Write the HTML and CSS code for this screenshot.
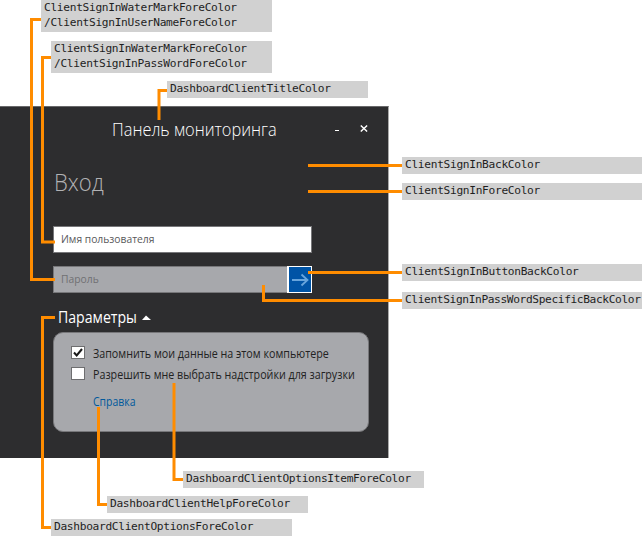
FILE: index.html
```html
<!DOCTYPE html>
<html lang="ru">
<head>
<meta charset="utf-8">
<title>Панель мониторинга</title>
<link rel="stylesheet" href="styles.css">
</head>
<body>
<main class="diagram">
  <section class="window">
    <header class="titlebar">
      <h1 class="title"><span>Панель мониторинга</span></h1>
      <span class="minimize"></span>
      <svg class="close" width="8" height="7" viewBox="0 0 8 7"><path d="M.8.5 7.2 6.5M7.2.5.8 6.5"/></svg>
    </header>
    <h2 class="heading"><span>Вход</span></h2>
    <div class="field user"><span class="user-text">Имя пользователя</span></div>
    <div class="field password">
      <span class="pass-text">Пароль</span>
      <div class="submit"><svg width="22" height="24" viewBox="0 0 22 24"><path d="M3 13H18.500M12.500 7.500 18.500 13 12.500 18.500"/></svg></div>
    </div>
    <div class="options-toggle"><span>Параметры</span><svg width="10" height="5" viewBox="0 0 10 5"><path d="M0 5 4 0.500 9 5z"/></svg></div>
    <div class="options">
      <div class="option"><span class="box"><svg width="12" height="11" viewBox="0 0 12 11"><path d="M2 5.500 4.700 8.500 10 2"/></svg></span><span class="remember">Запомнить мои данные на этом компьютере</span></div>
      <div class="option"><span class="box"></span><span class="addins">Разрешить мне выбрать надстройки для загрузки</span></div>
      <a class="help">Справка</a>
    </div>
  </section>

  <svg class="leaders" width="642" height="536" viewBox="0 0 642 536">
    <path d="M41 19.500H31.500V279.500H55"/>
    <path d="M52 57.500H42.500V242H55"/>
    <path d="M168 90.500H159V120"/>
    <path d="M308 165.500H402M308 191.500H402M308 272.500H402"/>
    <path d="M263.500 285V300.500H402"/>
    <path d="M55 317.500H42.500V527.500H52"/>
    <path d="M98.500 407V504.500H108"/>
    <path d="M174 383V479.500H184"/>
  </svg>

  <div class="label double l-user">ClientSignInWaterMarkForeColor<br>/ClientSignInUserNameForeColor</div>
  <div class="label double l-pass">ClientSignInWaterMarkForeColor<br>/ClientSignInPassWordForeColor</div>
  <div class="label l-title">DashboardClientTitleColor</div>
  <div class="label l-back">ClientSignInBackColor</div>
  <div class="label l-fore">ClientSignInForeColor</div>
  <div class="label l-button">ClientSignInButtonBackColor</div>
  <div class="label l-specific">ClientSignInPassWordSpecificBackColor</div>
  <div class="label l-item">DashboardClientOptionsItemForeColor</div>
  <div class="label l-help">DashboardClientHelpForeColor</div>
  <div class="label l-options">DashboardClientOptionsForeColor</div>
</main>
</body>
</html>
```
FILE: styles.css
```css
* { box-sizing: border-box; }
body { margin: 0; background: #fff; }
.diagram {
  position: relative;
  width: 642px;
  height: 536px;
  padding-top: 106px;
  overflow: hidden;
  font-family: "Open Sans", "Noto Sans", sans-serif;
}
.window {
  width: 389px;
  height: 352px;
  padding: 0 20px 0 53px;
  background: #2d2d2f;
  border-top: 1px solid #68686a;
  border-right: 1px solid #aaa;
}
.window span { transform-origin: left center; }
.titlebar { display: flex; height: 44px; align-items: center; color: #fff; }
.title {
  width: 225px;
  margin: 0 0 0 59px;
  font-size: 17.5px;
  line-height: 24px;
  font-weight: 300;
  white-space: nowrap;
}
.title span { display: block; width: max-content; transform: scaleX(.937); }
.minimize { width: 4px; height: 1px; margin: 3px 0 0 1px; background: #fff; }
.close { margin: -2px 0 0 21px; fill: none; stroke: #fff; stroke-width: 1.5; }
.heading {
  height: 76px;
  margin: 0;
  padding: 15px 0 0 1px;
  color: #b2b2b4;
  font-size: 24px;
  line-height: 32px;
  font-weight: 300;
}
.heading span { display: inline-block; transform: scaleX(.92); }
.field {
  display: flex;
  width: 259px;
  height: 27px;
  align-items: center;
  justify-content: space-between;
  padding-left: 7px;
  border: 1px solid #77777a;
  font-size: 11px;
}
.user { margin-top: -1px; background: #fff; color: #58585a; }
.password { margin-top: 13px; background: #a7a8ac; color: #707073; }
.user-text, .pass-text { margin-top: -2px; transform: scaleX(.937); }
.submit { flex: none; width: 25px; height: 27px; margin-right: -1px; padding: 0; background: #0054a6; border: 1px solid #fff; border-left-width: 2px; }
.submit svg { display: block; fill: none; stroke: #68a5dc; stroke-width: 1.8; }
.options-toggle {
  display: flex;
  height: 39px;
  align-items: center;
  padding: 9px 0 0 5px;
  color: #fff;
  font-size: 15.5px;
  line-height: 20px;
}
.options-toggle span { width: 84px; transform: scaleX(.91); }
.options-toggle svg { fill: #fff; }
.options {
  width: 316px;
  height: 100px;
  padding: 13px 0 0 17px;
  background: #a7a8ac;
  border: 1.5px solid #77777a;
  border-radius: 10px;
}
.option { display: flex; height: 21px; gap: 8px; color: #222; font-size: 12px; line-height: 16px; white-space: nowrap; }
.box { width: 14px; height: 13px; flex: none; background: #fff; border: 1px solid #6e6e70; }
.box svg { display: block; fill: none; stroke: #181818; stroke-width: 2; }
.remember, .addins { transform: scaleX(.893); }
.help { display: block; width: max-content; margin: 6px 0 0 22px; color: #00599c; font-size: 12px; line-height: 16px; transform: scaleX(.87); transform-origin: left center; }
.leaders { position: absolute; left: 0; top: 0; fill: none; stroke: #ff8c00; stroke-width: 3; stroke-linecap: butt; }
.label {
  position: absolute;
  width: 240px;
  height: 17px;
  padding-left: 3px;
  background: #d1d1d1;
  color: #1e1e1e;
  font-family: "DejaVu Sans Mono", monospace;
  font-size: 11.2px;
  letter-spacing: -.31px;
  line-height: 15px;
  white-space: nowrap;
}
.double { width: 231px; height: 32px; line-height: 14.5px; padding-top: 1px; }
.l-user { left: 41px; top: 0; }
.l-pass { left: 51px; top: 41px; width: 221px; }
.l-title { left: 167px; top: 81px; width: 201px; }
.l-back { left: 402px; top: 157px; }
.l-fore { left: 402px; top: 183px; }
.l-button { left: 402px; top: 264px; }
.l-specific { left: 402px; top: 292px; letter-spacing: -.37px; }
.l-item { left: 183px; top: 471px; width: 241px; }
.l-help { left: 107px; top: 496px; width: 201px; }
.l-options { left: 51px; top: 519px; width: 241px; }
```
